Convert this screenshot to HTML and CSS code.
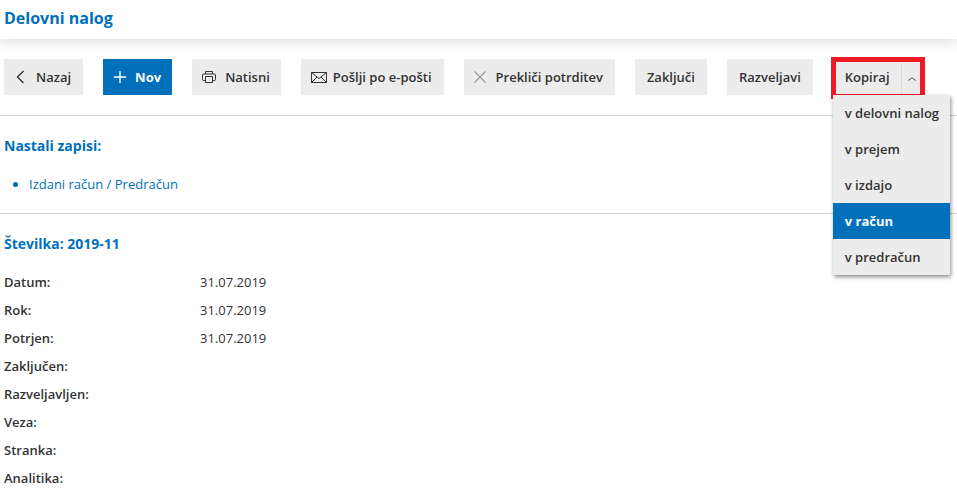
FILE: index.html
```html
<!DOCTYPE html>
<html lang="sl">
<head>
<meta charset="utf-8">
<title>Delovni nalog</title>
<link rel="stylesheet" href="styles.css">
</head>
<body>
<header class="header"><h1 class="title">Delovni nalog</h1></header>
<nav class="toolbar">
  <a class="btn btn-back"><svg class="icon" width="10" height="14" viewBox="0 0 10 14"><path d="M7.500 1 1.500 7l6 6" fill="none" stroke="#333" stroke-width="1.400"/></svg>Nazaj</a>
  <a class="btn btn-primary"><svg class="icon" width="12" height="12" viewBox="0 0 12 12"><path d="M6 0v12M0 6h12" fill="none" stroke="#fff" stroke-width="1.400"/></svg>Nov</a>
  <a class="btn btn-print"><svg class="icon" width="14" height="12" viewBox="0 0 14 12"><path d="M3.500 3v-2.500h7v2.500M3.500 9.500h-2a1 1 0 0 1-1-1v-4.500a1 1 0 0 1 1-1h11a1 1 0 0 1 1 1v4.500a1 1 0 0 1-1 1h-2M3.500 5.500h7v6h-7z" fill="none" stroke="#333" stroke-width="1"/></svg>Natisni</a>
  <a class="btn btn-mail"><svg class="icon" width="16" height="11" viewBox="0 0 16 11"><path d="M.5.500h15v10H.5zM.5.500 8 6.500l7.500-6M.5 10.500l5.500-5.500M15.500 10.500 10 5" fill="none" stroke="#333" stroke-width="1"/></svg>Pošlji po e-pošti</a>
  <a class="btn btn-cancel"><svg class="icon" width="12" height="12" viewBox="0 0 12 12"><path d="M.5.500l11 11M11.500.500l-11 11" fill="none" stroke="#9a9a9a" stroke-width="1.200"/></svg>Prekliči potrditev</a>
  <a class="btn">Zaključi</a>
  <a class="btn">Razveljavi</a>
  <div class="split">
    <a class="btn split-main">Kopiraj</a>
    <a class="btn split-caret"><svg class="caret" width="8" height="4" viewBox="0 0 8 4"><path d="M.3 3.500 4 .8 7.700 3.500" fill="none" stroke="#555" stroke-width="1"/></svg></a>
    <div class="highlight"></div>
    <ul class="menu">
      <li class="menu-item">v delovni nalog</li>
      <li class="menu-item">v prejem</li>
      <li class="menu-item">v izdajo</li>
      <li class="menu-item menu-item-active">v račun</li>
      <li class="menu-item">v predračun</li>
    </ul>
  </div>
</nav>
<section class="records">
  <h2 class="heading">Nastali zapisi:</h2>
  <ul class="links"><li><a class="link">Izdani račun / Predračun</a></li></ul>
</section>
<section class="details">
  <h2 class="heading">Številka: 2019-11</h2>
  <dl class="fields">
    <dt>Datum:</dt><dd>31.07.2019</dd>
    <dt>Rok:</dt><dd>31.07.2019</dd>
    <dt>Potrjen:</dt><dd>31.07.2019</dd>
    <dt>Zaključen:</dt><dd></dd>
    <dt>Razveljavljen:</dt><dd></dd>
    <dt>Veza:</dt><dd></dd>
    <dt>Stranka:</dt><dd></dd>
    <dt>Analitika:</dt><dd></dd>
  </dl>
</section>
</body>
</html>
```
FILE: styles.css
```css
* { box-sizing: border-box; }
html, body { margin: 0; height: 100%; overflow: hidden; }
body {
  background: #fff;
  color: #333;
  font-family: "Open Sans", sans-serif;
  font-size: 13px;
}
.header {
  height: 39px;
  padding-left: 4px;
  background: #fff;
  box-shadow: 0 2px 14px rgba(0, 0, 0, .16);
  position: relative;
}
.title {
  margin: 0;
  color: #0070ba;
  font-size: 16px;
  font-weight: 700;
  line-height: 37px;
}
.toolbar {
  display: flex;
  gap: 20px;
  height: 77px;
  padding: 20px 0 0 4px;
  border-bottom: 1px solid #d2d2d2;
}
.btn {
  display: flex;
  align-items: center;
  height: 36px;
  padding: 0 12px;
  background: #ececec;
  color: #333;
  font-weight: 600;
  white-space: nowrap;
}
.icon { flex: none; }
.btn-back { gap: 10px; }
.btn-primary { background: #0070ba; color: #fff; font-weight: 700; padding: 0 11px; gap: 9px; }
.btn-print { padding: 0 11px 0 10px; gap: 9px; }
.btn-mail { padding-left: 10px; gap: 6px; }
.btn-cancel { padding-left: 10px; gap: 10px; }
.split { display: flex; position: relative; }
.split-main { padding: 0 11px 0 12px; border-right: 1px solid #dcdcdc; }
.split-caret { width: 20px; padding: 0 0 0 6px; }
.caret { margin-top: 3px; }
.highlight {
  position: absolute;
  left: -2px;
  top: -2px;
  width: 94px;
  height: 42px;
  border: 5px solid #ed1c24;
}
.menu {
  position: absolute;
  left: 0;
  top: 36px;
  width: 117px;
  margin: 0;
  padding: 0;
  list-style: none;
  background: #ececec;
  box-shadow: 1px 2px 4px rgba(0, 0, 0, .45);
}
.menu-item {
  height: 36px;
  padding-left: 12px;
  color: #333;
  font-weight: 600;
  line-height: 36px;
  white-space: nowrap;
}
.menu-item-active { background: #0070ba; color: #fff; font-weight: 700; }
.heading {
  margin: 0;
  color: #0070ba;
  font-size: 14px;
  font-weight: 700;
  line-height: 20px;
}
.records {
  height: 98px;
  padding: 20px 0 0 4px;
  border-bottom: 1px solid #d2d2d2;
}
.links {
  margin: 18px 0 0;
  padding: 0 0 0 25px;
  color: #0070ba;
  line-height: 20px;
}
.link { color: #0070ba; }
.details { padding: 20px 0 0 4px; }
.fields {
  display: grid;
  grid-template-columns: 196px 1fr;
  grid-auto-rows: 28px;
  margin: 14px 0 0;
  line-height: 28px;
}
.fields dt { font-weight: 600; }
.fields dd { margin: 0; }
```
